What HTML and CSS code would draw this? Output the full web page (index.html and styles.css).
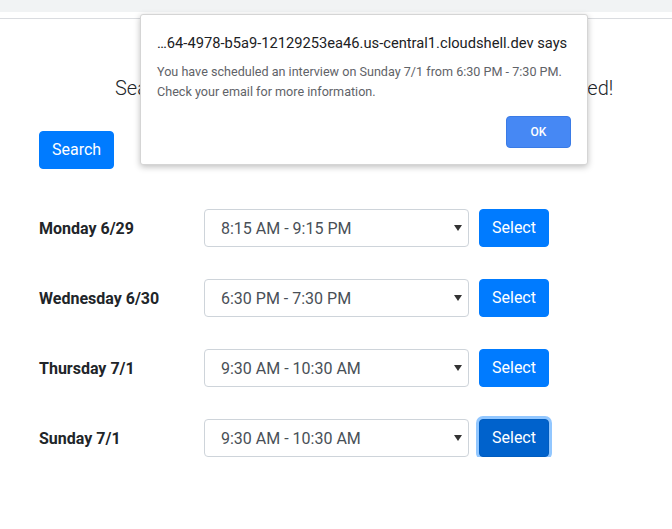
FILE: index.html
```html
<!DOCTYPE html>
<html>
<head>
<meta charset="utf-8">
<link rel="stylesheet" href="styles.css">
</head>
<body>
<div class="topbar"></div>
<div class="rule"></div>
<main class="page">
  <p class="lead">Search for open interview times below and get scheduled!</p>
  <button class="btn">Search</button>
  <div class="rows">
    <div class="row">
      <div class="day">Monday 6/29</div>
      <div class="select"><span>8:15 AM - 9:15 PM</span><svg class="caret" width="8" height="6" viewBox="0 0 8 6"><path d="M0 0h8L4 6z" fill="#333"/></svg></div>
      <button class="btn">Select</button>
    </div>
    <div class="row">
      <div class="day">Wednesday 6/30</div>
      <div class="select"><span>6:30 PM - 7:30 PM</span><svg class="caret" width="8" height="6" viewBox="0 0 8 6"><path d="M0 0h8L4 6z" fill="#333"/></svg></div>
      <button class="btn">Select</button>
    </div>
    <div class="row">
      <div class="day">Thursday 7/1</div>
      <div class="select"><span>9:30 AM - 10:30 AM</span><svg class="caret" width="8" height="6" viewBox="0 0 8 6"><path d="M0 0h8L4 6z" fill="#333"/></svg></div>
      <button class="btn">Select</button>
    </div>
    <div class="row">
      <div class="day">Sunday 7/1</div>
      <div class="select"><span>9:30 AM - 10:30 AM</span><svg class="caret" width="8" height="6" viewBox="0 0 8 6"><path d="M0 0h8L4 6z" fill="#333"/></svg></div>
      <button class="btn btn-focus">Select</button>
    </div>
  </div>
</main>
<div class="dialog">
  <div class="dialog-title">…64-4978-b5a9-12129253ea46.us-central1.cloudshell.dev says</div>
  <div class="dialog-msg">You have scheduled an interview on Sunday 7/1 from 6:30 PM - 7:30 PM.<br>Check your email for more information.</div>
  <div class="dialog-actions"><button class="ok">OK</button></div>
</div>
</body>
</html>
```
FILE: styles.css
```css
html, body {
  margin: 0;
  padding: 0;
  background: #fff;
  font-family: Roboto, "Liberation Sans", sans-serif;
  color: #212529;
}
.topbar {
  height: 12px;
  background: #f1f3f4;
}
.rule {
  height: 1px;
  margin-top: 6px;
  background: #dadce0;
}
.page {
  padding: 0 0 0 39px;
}
.lead {
  margin: 54px 0 0 76px;
  font-size: 20px;
  font-weight: 300;
  line-height: 30px;
  word-spacing: -0.6px;
  white-space: nowrap;
}
.btn {
  display: inline-block;
  font-family: inherit;
  font-size: 16px;
  line-height: 24px;
  padding: 6px 12px;
  color: #fff;
  background: #007bff;
  border: 1px solid #007bff;
  border-radius: 4px;
  margin-top: 28px;
}
.rows {
  display: flex;
  flex-direction: column;
  gap: 32px;
  margin-top: 40px;
}
.row {
  display: flex;
  align-items: center;
  height: 38px;
}
.row .btn {
  margin: 0 0 0 10px;
}
.day {
  width: 165px;
  font-weight: 700;
  font-size: 16px;
}
.select {
  width: 265px;
  height: 38px;
  box-sizing: border-box;
  border: 1px solid #ced4da;
  border-radius: 4px;
  display: flex;
  align-items: center;
  justify-content: space-between;
  padding: 0 6px 0 16px;
  font-size: 16px;
  color: #495057;
}
.caret {
  display: block;
}
.btn-focus {
  background: #0062cc;
  border-color: #005cbf;
  box-shadow: 0 0 0 3px rgba(38, 143, 255, 0.5);
}
.dialog {
  position: absolute;
  left: 140px;
  top: 14px;
  width: 448px;
  height: 151px;
  box-sizing: border-box;
  background: #fff;
  border: 1px solid #d5d5d5;
  border-radius: 3px;
  box-shadow: 0 2px 6px rgba(0, 0, 0, 0.25);
  padding: 18px 16px 16px 16px;
}
.dialog-title {
  font-size: 14.7px;
  line-height: 20px;
  color: #202124;
}
.dialog-msg {
  margin-top: 9px;
  font-size: 12.6px;
  line-height: 20px;
  color: #5f6368;
}
.dialog-actions {
  display: flex;
  justify-content: flex-end;
  margin-top: 14px;
}
.ok {
  width: 65px;
  height: 32px;
  font-family: inherit;
  font-size: 12px;
  font-weight: 500;
  color: #fff;
  background: #4688f4;
  border: 1px solid #3a7be6;
  border-radius: 4px;
}
```
